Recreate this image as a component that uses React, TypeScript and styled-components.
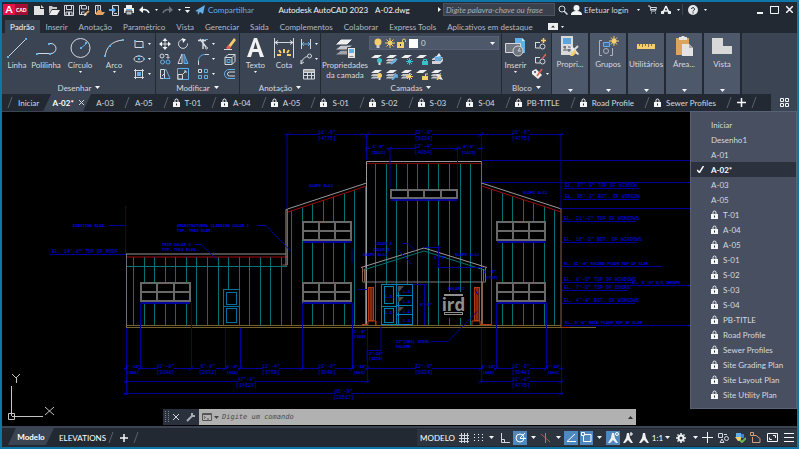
import React, { useState } from "react";
import styled, { createGlobalStyle, css } from "styled-components";

const c = {
  frame: "#0e76a8",
  bar: "#222933",
  panel: "#3b4453",
  raised: "#4d586b",
  menu: "#474f61",
  line: "#2a313c",
  text: "#d5d9df",
  white: "#f4f6f8",
  blue: "#62b0e8",
  active: "#4f87bf",
  yellow: "#f5cd6a",
  orange: "#e0a060",
};

const Global = createGlobalStyle`
  *, *::before, *::after { box-sizing: border-box; }
  body { margin: 0; background: #000; }
  body, button, input, select {
    font-family: Lato, "Open Sans", sans-serif;
    font-size: 8px;
    line-height: 10px;
    color: ${c.text};
  }
  button { border: 0; margin: 0; padding: 0; background: none; white-space: nowrap; cursor: pointer; }
  svg { display: block; flex: none; }
`;

/* ---------- shell ---------- */

const Window = styled.div`
  min-height: 100vh;
  display: flex;
  flex-direction: column;
  background: ${c.bar};
  border: 2px solid ${c.frame};
  overflow: hidden;
`;

const TitleBar = styled.header`
  display: flex;
  align-items: center;
  height: 18px;
  padding: 0 0 3px 1px;
  flex: none;
`;

const Logo = styled.div`
  display: flex;
  align-items: center;
  width: 25px;
  height: 11px;
  margin-right: 3px;
  background: #a30f33;
  color: #fff;
  font-weight: 900;
  font-size: 5px;
`;

const LogoMark = styled.span`
  width: 12px;
  height: 11px;
  margin-right: 1px;
  line-height: 11px;
  font-size: 10px;
  text-align: center;
  background: #e6124a;
`;

const IconButton = styled.button<{ $w?: number; $on?: boolean; $h?: number }>`
  display: flex;
  align-items: center;
  justify-content: center;
  flex: none;
  width: ${(p) => p.$w ?? 15}px;
  height: ${(p) => p.$h ?? 15}px;
  background: ${(p) => (p.$on ? c.active : "none")};
`;

const Share = styled.a`
  display: flex;
  align-items: center;
  gap: 3px;
  margin-left: 2px;
  color: ${c.blue};
  text-decoration: none;
`;

const Title = styled.h1`
  flex: 1;
  display: flex;
  justify-content: center;
  gap: 7px;
  margin: 0;
  padding-right: 4px;
  font-size: 8px;
  font-weight: 400;
  color: ${c.white};
  white-space: nowrap;
`;

const Search = styled.input`
  width: 112px;
  height: 13px;
  margin-left: 2px;
  padding: 0 2px;
  border: 1px solid #4c5462;
  border-radius: 0;
  background: #3a414d;
  font-style: italic;
  &::placeholder { color: #a9aeb6; opacity: 1; }
`;

const Account = styled.button`
  display: flex;
  align-items: center;
  gap: 2px;
  margin-left: 1px;
  width: 58px;
`;

const Divider = styled.span`
  width: 1px;
  height: 11px;
  background: ${c.panel};
`;

const WindowButtons = styled.div`
  display: flex;
  margin-left: 44px;
`;

/* ---------- ribbon ---------- */

const RibbonTabs = styled.nav`
  display: flex;
  align-items: stretch;
  gap: 1px;
  height: 13px;
  padding-left: 3px;
  flex: none;
`;

const RibbonTab = styled.button<{ $on?: boolean }>`
  padding: 0 5px;
  background: ${(p) => (p.$on ? c.panel : "none")};
  color: ${(p) => (p.$on ? c.white : "#b3b9c2")};
`;

const Ribbon = styled.section`
  display: flex;
  height: 61px;
  padding-left: 1px;
  background: ${c.panel};
  flex: none;
`;

const Panel = styled.div`
  display: flex;
  flex-direction: column;
  border-right: 1px solid ${c.bar};
  flex: none;
`;

const PanelBody = styled.div`
  display: flex;
  flex: 1;
  padding-top: 3px;
`;

const PanelTitle = styled.button`
  display: flex;
  align-items: center;
  justify-content: center;
  gap: 4px;
  height: 13px;
`;

const BigButton = styled.button<{ $w: number }>`
  display: flex;
  flex-direction: column;
  align-items: center;
  width: ${(p) => p.$w}px;
  height: 45px;
  padding-top: 1px;
  gap: 1px;
`;

const BigArt = styled.span`
  display: flex;
  align-items: center;
  justify-content: center;
  height: 22px;
`;

const Tools = styled.div<{ $cols: string }>`
  display: grid;
  grid-template-columns: ${(p) => p.$cols};
  grid-auto-rows: 15px;
`;

const Tool = styled.button`
  display: flex;
  align-items: center;
  justify-content: center;
  gap: 3px;
`;

const LayerColumn = styled.div`
  display: flex;
  flex-direction: column;
  gap: 1px;
  width: 132px;
  padding-right: 2px;
`;

const LayerBox = styled.label`
  display: flex;
  align-items: center;
  gap: 2px;
  height: 14px;
  padding: 0 3px;
  background: ${c.raised};
  border: 1px solid #566177;
`;

const Swatch = styled.span`
  width: 9px;
  height: 9px;
  background: #fff;
`;

const LayerSelect = styled.select`
  flex: 1;
  min-width: 0;
  height: 12px;
  padding: 0 1px;
  border: 0;
  background: none;
  appearance: none;
`;

const Collapsed = styled.button`
  display: flex;
  flex-direction: column;
  align-items: center;
  width: 38px;
  padding: 3px 0 2px;
  gap: 2px;
  background: ${c.raised};
  border-right: 2px solid ${c.bar};
  flex: none;
`;

const Grow = styled.span`
  flex: 1;
`;

/* ---------- file tabs ---------- */

const FileTabs = styled.nav`
  display: flex;
  align-items: center;
  height: 18px;
  padding-left: 5px;
  border-bottom: 1px solid ${c.panel};
  flex: none;
`;

const FileTab = styled.button`
  display: flex;
  align-items: center;
  gap: 5px;
  height: 16px;
  padding: 0 10px 0 5px;
`;

const LockedTab = styled(FileTab)`
  padding-left: 4px;
`;

const slanted = css`
  clip-path: polygon(8px 0, 100% 0, calc(100% - 8px) 100%, 0 100%);
`;

const CurrentTab = styled.button`
  display: flex;
  align-items: center;
  justify-content: center;
  gap: 5px;
  width: 48px;
  height: 17px;
  margin-left: -6px;
  padding-left: 2px;
  background: ${c.panel};
  color: #fff;
  font-weight: 700;
  ${slanted}
`;

const TabGrid = styled.button`
  display: flex;
  align-items: center;
  justify-content: center;
  width: 26px;
  height: 17px;
  margin-left: auto;
  background: ${c.panel};
`;

/* ---------- canvas ---------- */

const Canvas = styled.main`
  position: relative;
  flex: 1;
  min-height: 314px;
  background: #000;
`;

const Drawing = styled.svg`
  width: 100%;
  height: 100%;
`;

const Menu = styled.div`
  position: absolute;
  top: -1px;
  right: 0;
  width: 107px;
  padding: 5px 0 6px;
  background: ${c.menu};
  border: 1px solid #586276;
`;

const MenuItem = styled.button<{ $on?: boolean }>`
  display: grid;
  grid-template-columns: 20px auto;
  align-items: center;
  width: 100%;
  height: 15px;
  text-align: left;
  background: ${(p) => (p.$on ? "#2b323e" : "none")};
  color: ${(p) => (p.$on ? "#fff" : c.text)};
  font-weight: ${(p) => (p.$on ? 700 : 400)};
`;

const MenuMark = styled.span`
  display: flex;
  padding-left: 6px;
`;

const MenuLabel = styled.span`
  display: flex;
  align-items: center;
  gap: 5px;
`;

const Command = styled.form`
  position: absolute;
  left: 161px;
  right: 161px;
  bottom: 1px;
  display: flex;
  height: 16px;
  background: ${c.line};
`;

const CommandField = styled.label`
  display: flex;
  align-items: center;
  gap: 2px;
  flex: 1;
  padding: 0 3px;
  background: #b1b1b1;
`;

const CommandInput = styled.input`
  flex: 1;
  min-width: 0;
  height: 14px;
  padding: 0 1px;
  border: 0;
  background: none;
  font: italic 7px "DejaVu Sans Mono", monospace;
  color: #333;
  &::placeholder { color: #4a4a4a; opacity: 1; }
`;

/* ---------- status bar ---------- */

const StatusBar = styled.footer`
  display: flex;
  align-items: center;
  height: 21px;
  padding-left: 6px;
  border-top: 2px solid ${c.panel};
  flex: none;
`;

const ModelTab = styled.button`
  width: 46px;
  height: 17px;
  margin-bottom: 2px;
  background: ${c.panel};
  color: #fff;
  font-weight: 700;
  ${slanted}
`;

const LayoutTab = styled.button`
  padding: 0 2px 0 5px;
  color: #fff;
`;

const StatusTools = styled.div`
  display: flex;
  align-items: center;
  height: 17px;
  margin-left: auto;
  padding-right: 1px;
  background: #2c3440;
  color: #fff;
`;

const StatusText = styled.button<{ $w: number }>`
  width: ${(p) => p.$w}px;
  color: #fff;
`;

const Spacer = styled.span<{ $w: number }>`
  width: ${(p) => p.$w}px;
`;

/* ---------- icons ---------- */

type IcProps = { w?: number; h?: number; s?: string; sw?: number; children: React.ReactNode };
const Ic = ({ w = 12, h = 12, s = c.text, sw = 1, children }: IcProps) => (
  <svg width={w} height={h} viewBox={`0 0 ${w} ${h}`} fill="none" stroke={s} strokeWidth={sw} aria-hidden="true">
    {children}
  </svg>
);

const Caret = ({ color = c.white }: { color?: string }) => (
  <Ic w={5} h={3} s="none"><path d="M0 0h5L2.500 3z" fill={color} /></Ic>
);
const SmallCaret = () => <Ic w={3} h={2} s="none"><path d="M0 0h3L1.500 2z" fill={c.white} /></Ic>;
const Lock = () => (
  <Ic w={7} h={9} s={c.white}><path d="M2 4V2.500a1.500 1.500 0 0 1 3 0V4" /><path d="M0 4h7v5H0z" fill={c.white} stroke="none" /><path d="M3 5.500h1v2H3z" fill={c.bar} stroke="none" /></Ic>
);
const Slash = () => <Ic w={6} h={11} s="#59626f"><path d="M5 0L1 11" /></Ic>;
const Plus = ({ size = 9 }: { size?: number }) => (
  <Ic w={size} h={size} s={c.white} sw={1.5}><path d={`M0 ${size / 2}h${size}M${size / 2} 0v${size}`} /></Ic>
);

const quick: { name: string; art: React.ReactNode }[] = [
  { name: "Novo", art: <Ic><path d="M1 2h6v3h4v6H1z" fill="#e2e2e2" stroke="none" /><path d="M8 1l3 3H8z" fill="#e2e2e2" stroke="none" /></Ic> },
  { name: "Abrir", art: <Ic><path d="M1 10V2h3l1 1h4v2H4L1 10z" fill="#c9c9c9" stroke="none" /><path d="M4 6h8l-3 5H1z" fill="#eee" stroke="none" /></Ic> },
  { name: "Salvar", art: <Ic><path d="M1.500 1.500h9v10h-9zM3.500 1.500v4h5v-4M3 11V8h6v3" /><path d="M5 8h2v3H5z" fill={c.text} stroke="none" /></Ic> },
  { name: "Salvar como", art: <Ic><path d="M8 1.500H1.500v9H6M3.500 2v3h5V2M3.500 10V8h3M10.500 2v4" /><path d="M6 11l5-4" stroke={c.orange} strokeWidth={2} /><path d="M6 12l1-3 2 2z" fill="#eee" stroke="none" /></Ic> },
  { name: "Abrir da Web", art: <Ic><path d="M2.500 10V1.500h5V6" /><path d="M4 3h2M4 5h2" /><path d="M3 9l2-3h3l1 2h3l-2 3H3z" fill={c.orange} stroke="none" /></Ic> },
  { name: "Salvar na Web", art: <Ic><path d="M4.500 1.500h6v10h-6z" /><path d="M6 9.500h3" /><path d="M1 5h4V3l3 3-3 3V7H1z" fill={c.blue} stroke="none" /></Ic> },
  { name: "Plotar", art: <Ic><path d="M3 1h6v3H3zM1 4h10v5H1z" fill="#eee" stroke="none" /><path d="M3 7h6v4H3z" fill="#bbb" stroke={c.bar} /><path d="M3 5.500h6" stroke={c.blue} /></Ic> },
];

const Undo = ({ flip, color }: { flip?: boolean; color: string }) => (
  <Ic w={11} h={8} s={color} sw={1.5}>
    <path d={flip ? "M1 7c1-3 4-4 7-3" : "M10 7c-1-3-4-4-7-3"} />
    <path d={flip ? "M7 0l4 4-4 3z" : "M4 0L0 4l4 3z"} fill={color} stroke="none" />
  </Ic>
);

const dot = (x: number, y: number) => <rect x={x - 1} y={y - 1} width={2} height={2} fill={c.blue} stroke="none" />;

const art = {
  line: <Ic w={20} h={20}><path d="M1 19L19 1" />{dot(1, 19)}{dot(19, 1)}</Ic>,
  poly: <Ic w={21} h={20}><path d="M1 15.500h14a5 5 0 0 0 0-10h-2" />{dot(1, 16)}{dot(14, 16)}{dot(13, 6)}</Ic>,
  circle: <Ic w={21} h={20}><circle cx="10.500" cy="10" r="9.500" /><path d="M11 10l5-4" stroke={c.blue} />{dot(11, 10)}{dot(16, 5)}</Ic>,
  arc: <Ic w={20} h={20}><path d="M1 19C2 9 8 3 19 2" />{dot(1, 18)}{dot(6, 8)}{dot(19, 2)}</Ic>,
  text: <Ic w={17} h={20} s="none"><path d="M0 19L7 0h3l7 19h-4l-1.500-5h-6L4 19zM6.500 11h4L8.500 4z" fill="#f2f2f2" fillRule="evenodd" /></Ic>,
  dim: <Ic w={22} h={20}><path d="M1.500 0v20M20.500 0v20M2 4.500h18M5 2.500l-3 2 3 2M17 2.500l3 2-3 2" /><path d="M11 11v4M6 12l2 3M16 12l-2 3M4 17h4M14 17h4" stroke={c.yellow} strokeWidth={2} /></Ic>,
  layers: (
    <Ic w={23} h={21} s={c.panel}>
      <path d="M1 17l6-5h12l-6 5z" fill="#9ea4ac" /><path d="M1 12l6-5h12l-6 5z" fill="#c3c7cc" /><path d="M1 7l6-6h12l-6 6z" fill="#eee" />
      <path d="M13.500 9.500h8v11h-8z" fill="#e8e8e8" /><path d="M15 11h5v4h-5z" fill={c.blue} stroke="none" /><path d="M15.500 18.500h4" stroke="#888" />
    </Ic>
  ),
  insert: (
    <Ic w={21} h={20}><path d="M10 0h7l3 3v12H10z" fill={c.blue} stroke="none" /><path d="M17 0v3h3z" fill="#cfe9fb" stroke="none" /><path d="M.5 5.500h15v9H.5z" fill="#70767f" /><circle cx="13" cy="13" r="5" fill="#70767f" /><path d="M13 13l2-3M13 13h3" /></Ic>
  ),
  props: (
    <Ic w={20} h={21} s="none"><path d="M1 0h12v19H1z" fill="#dadada" /><path d="M3 2h8v6H3z" fill="#58a5df" /><path d="M3 11h3M8 11h3M3 14h8M5 10v3M9 13v3" stroke="#4b5260" /><path d="M10 9l4 3 5 6-1 1-6-4z" fill="#eee" /><path d="M18 10l-4 4" stroke="#ddd" strokeWidth={2} /><path d="M14 14l-4 6h3l4-4z" fill={c.yellow} /></Ic>
  ),
  groups: (
    <Ic w={21} h={21} s="#aeb4bc"><path d="M4 4.500H1.500v15H4M12 19.500h2.500V12" /><path d="M5.500 6.500h6v4h-6z" stroke={c.blue} fill="#3b6f9a" /><circle cx="8" cy="15" r="2.500" /><path d="M16 0v10M11 5h10M13 1.500l6 7M19 1.500l-6 7" stroke={c.yellow} /><circle cx="16" cy="5" r="2.500" fill={c.yellow} stroke="none" /></Ic>
  ),
  utils: <Ic w={20} h={21} s="#8a7340"><path d="M1 8h18v5H1z" fill={c.yellow} stroke="none" /><path d="M3.500 8v2M6.500 8v3M9.500 8v2M12.500 8v3M15.500 8v2" /></Ic>,
  clip: <Ic w={20} h={21} s="none"><path d="M2 2h13v17H2z" fill="#dca55c" /><path d="M5 1h2l1-1h2l1 1h2v3H5z" fill="#e5e5e5" /><path d="M8 8h7l4 4v8H8z" fill="#e3e3e3" /><path d="M15 8v4h4z" fill="#aaa" /></Ic>,
  view: <Ic w={20} h={21} s="none"><path d="M0 2h11v8h9v8H0z" fill="#d8d8d8" /></Ic>,
};

const drawTools = [
  <Ic><path d="M2 3.500h8v6H2z" />{dot(2, 3)}{dot(10, 9)}</Ic>,
  <Ic><ellipse cx="6" cy="6" rx="5" ry="3" />{dot(6, 6)}{dot(6, 3)}{dot(11, 6)}</Ic>,
  <Ic><path d="M1 2.500h10M1 9.500h10M2.500 1v10M9.500 1v10" /><path d="M4 4h4v4H4z" fill={c.blue} stroke="none" /></Ic>,
];

const modifyTools: [string, React.ReactNode, boolean?][] = [
  ["Mover", <Ic><path d="M6 2v8M2 6h8" /><path d="M6 0l2.500 3h-5zM6 12l2.500-3h-5zM0 6l3-2.500v5zM12 6L9 3.500v5z" fill={c.white} stroke="none" /></Ic>],
  ["Rotacionar", <Ic><path d="M7 1.500a4.500 4.500 0 1 0 3.500 4" /><path d="M5 0l4 1.500L6 5z" fill={c.white} stroke="none" /></Ic>],
  ["Aparar", <Ic><path d="M1 2.500h8M6 1v10M3 1l6 8" strokeWidth={1.5} /><circle cx="9.500" cy="10" r="1" /><path d="M8 1.500h3" stroke={c.blue} /></Ic>, true],
  ["Apagar", <Ic s="none"><path d="M4 8l6-8 2 2-6 8z" fill={c.yellow} /><path d="M4 7l3 2-2 3-3-2z" fill="#e5604f" /><path d="M0 11h8v1H0z" fill="#ddd" /></Ic>],
  ["Copiar", <Ic><circle cx="3" cy="3" r="2" /><circle cx="3.500" cy="9" r="2" stroke={c.blue} /><circle cx="9" cy="9" r="2" stroke={c.blue} /><path d="M6 1.500h3V5M7.500 4L9 5.500 10.500 4" /></Ic>],
  ["Espelhar", <Ic><path d="M5 1v9.500H1z" /><path d="M7 1v9.500h4z" stroke={c.blue} fill="#3d6d96" /></Ic>],
  ["Concordar", <Ic><path d="M1.500 12V7M7 1.500h5" /><path d="M1.500 8C1.500 4 4 1.500 8 1.500" stroke={c.blue} /></Ic>, true],
  ["Explodir", <Ic><path d="M1 4.500h7v7H1zM1 4.500l3-3h7l-3 3M11 1.500v7l-3 3" /><path d="M3 6.500h3v3H3z" stroke={c.blue} /></Ic>],
  ["Esticar", <Ic><path d="M1.500 1.500h4v9h-4z" /><path d="M6 1.500h1l4 9H4" stroke={c.blue} /><path d="M3 8l3-3" /></Ic>],
  ["Escala", <Ic><path d="M.500 .500h11v11H.500z" stroke={c.blue} /><path d="M1 6.500h4.500V11H1z" /><path d="M6 6l3-3M7 3h2v2" /></Ic>],
  ["Matriz", <Ic><path d="M1.500 1.500h3v3h-3z" /><path d="M7.500 1.500h3v3h-3zM1.500 7.500h3v3h-3zM7.500 7.500h3v3h-3z" stroke={c.blue} /></Ic>, true],
  ["Deslocamento", <Ic><path d="M11 1.500H5a4.500 4.500 0 0 0 0 9h6" stroke={c.blue} /><path d="M11 4H5.500a2 2 0 0 0 0 4H11" /></Ic>],
];

const annotTools = [
  <Ic><path d="M1.500 1v10M10.500 1v10" /><path d="M2 6h8M4 4L2 6l2 2M8 4l2 2-2 2" stroke={c.blue} /></Ic>,
  <Ic><circle cx="9.500" cy="3" r="2" /><path d="M7.500 3.500C4 4 2 7 1 11M1 7v4l3-2" /></Ic>,
  <Ic><path d="M.500 1.500h11v9.500H.500zM0 4.500h12M0 7.500h12M4.500 4v7M8.500 4v7" /><path d="M1 2h10v2H1z" fill="#aaa" stroke="none" /></Ic>,
];

const LayerIcon = ({ full, badge }: { full: boolean; badge: React.ReactNode }) => (
  <Ic s="none">
    <path d="M0 5l4-3h7L7 5z" fill="#eee" />
    {full && <path d="M0 7.500L2 6h6l2-1v1L7 8H0zM0 10l2-1.500h6l2-1v1L7 10.500H0z" fill="#bfc3c9" />}
    {badge}
  </Ic>
);
const bulb = (color: string) => <><circle cx="8.500" cy="7.500" r="2.500" fill={color} /><path d="M7.500 9.500h2V12h-2z" fill="#ddd" /></>;
const layerTools: [string, React.ReactNode][] = [
  ["Desligar", <LayerIcon full={false} badge={bulb("#35c2c9")} />],
  ["Isolar", <LayerIcon full badge={<path d="M5 11l6-5" stroke={c.blue} strokeWidth={2} />} />],
  ["Congelar", <LayerIcon full={false} badge={<path d="M8.500 5v7M5 8.500h7M6 6l5 5M11 6l-5 5" stroke="#35c2c9" />} />],
  ["Bloquear", <LayerIcon full={false} badge={<><path d="M6 8h6v4H6z" fill="#35c2c9" /><path d="M7.500 8V6.500h3V8" stroke="#35c2c9" /></>} />],
  ["Tornar atual", <Ic s="none"><path d="M1 6l3-2h8l-3 3H1zM1 8h8l3-3v3l-3 3H1z" fill="#cfd3d8" /><path d="M4 3h6v4l-2 1H4z" fill={c.blue} /><path d="M5 4l3-4 2 3z" fill="#eee" /></Ic>],
  ["Ligar todas", <LayerIcon full badge={bulb(c.yellow)} />],
  ["Desfazer isolamento", <LayerIcon full badge={<path d="M6 12l5-5M8 7h3v3" stroke={c.blue} strokeWidth={1.5} />} />],
  ["Descongelar", <LayerIcon full badge={<path d="M8.500 5v7M5 8.500h7M6 6l5 5M11 6l-5 5" stroke={c.yellow} />} />],
  ["Desbloquear", <LayerIcon full={false} badge={<><path d="M6 8h6v4H6z" fill={c.yellow} /><path d="M9.500 8V6h3" stroke={c.yellow} /></>} />],
  ["Corresponder", <LayerIcon full badge={<><path d="M5 6l4 1 3 5-4-1z" fill="#eee" /><path d="M10 7l-4 5" stroke={c.yellow} strokeWidth={1.5} /></>} />],
];

const blockTools = [
  <Ic><path d="M1 4.500h5M1.500 4v6H6" /><circle cx="8.500" cy="8.500" r="2.500" /><path d="M9.500 0v5M7 2.500h5" stroke={c.yellow} strokeWidth={1.5} /></Ic>,
  <Ic><path d="M1 4.500h5M1.500 4v6H6" /><circle cx="8.500" cy="8.500" r="2.500" /><path d="M8 6l4-5" stroke="#e5604f" strokeWidth={1.5} /></Ic>,
  <Ic><path d="M1 3l4-2 6 6-4 4-6-5z" fill="#eee" stroke="none" /><circle cx="4" cy="4" r="1" fill={c.panel} stroke="none" /><path d="M6 8l5-7" stroke="#e5604f" strokeWidth={1.5} /></Ic>,
];

const Sun = () => <Ic w={10} h={10} s={c.yellow}><circle cx="5" cy="5" r="2" fill={c.yellow} /><path d="M5 0v10M0 5h10M1.500 1.500l7 7M8.500 1.500l-7 7" /></Ic>;
const Bulb = () => <Ic w={10} h={11} s="none"><circle cx="5" cy="4" r="3.500" fill={c.yellow} /><path d="M3.500 7h3v3h-3z" fill="#cfcfcf" /></Ic>;
const OpenLock = () => <Ic w={10} h={10} s={c.yellow}><path d="M0 4h7v6H0z" fill={c.yellow} stroke="none" /><path d="M5.500 4V2.500a1.500 1.500 0 0 1 3 0V4" /><path d="M3 6h1v2H3z" fill={c.line} stroke="none" /></Ic>;

/* ---------- building elevation ---------- */

const B = "#00009e";
const T = "#007272";
const G = "#686868";
const BR = "#85604f";

const range = (from: number, n: number, step: number) => Array.from({ length: n }, (_, i) => Math.round(from + i * step) + 0.5);

const V = ({ x, y1, y2, s = B }: { x: number; y1: number; y2: number; s?: string }) => <path d={`M${x} ${y1}V${y2}`} stroke={s} />;
const H = ({ y, x1, x2, s = B }: { y: number; x1: number; x2: number; s?: string }) => <path d={`M${x1} ${y}H${x2}`} stroke={s} />;
const Note = ({ x, y, mid, small, children }: { x: number; y: number; mid?: boolean; small?: boolean; children: string }) => (
  <text x={x} y={y} textAnchor={mid ? "middle" : "start"} fill="#0000f0" fontSize={small ? 4 : 5} fontWeight={small ? 700 : 400} fontFamily={small ? "DejaVu Sans Mono, monospace" : "Liberation Mono, monospace"}>{children}</text>
);

const Glazing = ({ x, y, w, h, cols, rows }: { x: number; y: number; w: number; h: number; cols: number; rows: number }) => (
  <g stroke={G} strokeWidth={2}>
    <rect x={x} y={y} width={w} height={h} fill="#000" />
    {Array.from({ length: cols - 1 }, (_, i) => <path key={i} d={`M${x + Math.round((w * (i + 1)) / cols)} ${y}v${h}`} />)}
    {rows > 1 && <path d={`M${x} ${y + h / 2}h${w}`} />}
    <path d={`M${x} ${y + h + 2}h${w}`} stroke={B} />
  </g>
);

const Dimension = ({ x1, x2, y, a, b }: { x1: number; x2: number; y: number; a: string; b: string }) => {
  const m = (x1 + x2) / 2;
  const gap = Math.min(8, (x2 - x1) / 2 - 2);
  const small = x2 - x1 < 30;
  return (
    <g>
      <path d={`M${x1 - 2} ${y}H${m - gap}M${m + gap} ${y}H${x2 + 2}M${x1 - 2} ${y + 2}l4-4M${x2 - 2} ${y + 2}l4-4`} stroke={B} />
      <Note x={m} y={y - 1} mid small={small}>{a}</Note>
      <Note x={m} y={y + 5} mid small={small}>{b}</Note>
    </g>
  );
};

const levels: [number, number, number, string][] = [
  [565, 188, 639, "EL. 37'-9\" TOP OF WINDOW"],
  [565, 199, 639, "EL. 35'-2\" BOT. OF WINDOW"],
  [564, 221, 636, "EL. 21'-2\" TOP OF WINDOWS"],
  [564, 242, 637, "EL. 16'-2\" BOT. OF WINDOWS"],
  [564, 266, 662, "EL. 11'-8\" SECOND FLOOR TOP OF SLAB"],
  [564, 282, 631, "EL. 8'-0\" TOP OF WINDOWS"],
  [632, 285, 690, "EL. 8'-0\" U/S CANOPY"],
  [564, 290, 628, "EL. 7'-0\" TOP OF DOORS"],
  [564, 303, 635, "EL. 4'-4\" BOT. OF WINDOWS"],
  [565, 325, 690, "EL. 0'-0\" MAIN FLOOR TOP OF SLAB"],
];

const chain = [126, 140, 191, 225, 240, 302, 352, 367, 481, 496, 546, 561];
const chainText: [string, string][] = [
  ["2'-10\"", "[864]"], ["10'-0\"", "[3048]"], ["6'-8\"", "[2032]"], ["3'-0\"", "[914]"], ["12'-4\"", "[3759]"], ["10'-0\"", "[3048]"],
  ["2'-10\"", "[864]"], ["22'-9\"", "[6934]"], ["2'-10\"", "[864]"], ["10'-0\"", "[3048]"], ["2'-10\"", "[864]"],
];

const Elevation = () => (
  <Drawing viewBox="2 112 795 314" preserveAspectRatio="xMinYMin meet" fill="none" strokeWidth={1} role="img" aria-label="Elevação do edifício">
    {range(133, 15, 10.570).map((x) => <V key={x} x={x} y1={257} y2={325} s={T} />)}
    {range(291, 8, 10.570).map((x) => <V key={x} x={x} y1={212 - (x - 287) * 0.325} y2={325} s={T} />)}
    {range(375, 10, 10.570).map((x) => <V key={x} x={x} y1={163} y2={325} s={T} />)}
    {range(491, 7, 10.570).map((x) => <V key={x} x={x} y1={186 + (x - 481) * 0.325} y2={325} s={T} />)}

    <V x={126.5} y1={254} y2={327} s="#706a80" />
    <H x1={126} x2={286} y={254} s="#959595" />
    <H x1={127} x2={287} y={257} s="#a00a0a" />
    <H x1={127} x2={287} y={266.5} s={T} />
    <Glazing x={141} y={283} w={49} h={18} cols={3} rows={2} />
    <g stroke="#00709c" fill="#000"><rect x="223.500" y="289.500" width="16" height="36" /><path d="M224 306.500h15" /><rect x="226.500" y="292.500" width="10" height="12" /><rect x="226.500" y="308.500" width="10" height="14" /></g>

    <path d="M286 265.500V209.500L366.500 183" stroke="#999" />
    <path d="M287.500 209V265h-5" stroke={BR} />
    <path d="M288 212L366.500 186" stroke="#a00a0a" />
    <path d="M366.500 325V161.500H481.500" stroke="#999" />
    <H x1={367} x2={481} y={163.500} s="#780808" />
    <V x={481.500} y1={161} y2={325} s="#1c8c8c" />
    <path d="M481.500 183L561.500 209" stroke="#999" />
    <path d="M481.500 186L561 212" stroke="#a00a0a" />
    <V x={561} y1={209} y2={327} s={BR} />
    {[[303, 222], [303, 283], [497, 222], [497, 283]].map(([x, y]) => <Glazing key={`${x}-${y}`} x={x} y={y} w={48} h={18} cols={3} rows={2} />)}
    <Glazing x={391} y={190} w={66} h={8} cols={4} rows={1} />

    <path d="M361 267.500L424 248l63 19.500" stroke="#999" />
    <path d="M362 270.500L424 251l62 19.500" stroke={T} />
    <path d="M362.500 267v15h3v43M364.500 269v12M485.500 267v15h-3v43M483.500 269v12" stroke={BR} />
    <H x1={364} x2={484} y={282} s="#7b7b7b" />
    <g stroke="#b83a12" fill="#5c1c08"><rect x="368.500" y="287.500" width="5" height="33" /><rect x="474.500" y="287.500" width="5" height="33" /><path d="M371 288v32M477 288v32M362 324.500h6v-3.500h8v4M472 325v-4h8v3.500h11" fill="none" /></g>
    <g stroke="#0080b0"><rect x="381.500" y="284.500" width="31" height="40" fill="#000" /><path d="M396.500 285v40M382 306.500h14M397 295.500h15M397 305.500h15M397 314.500h15M398.500 286v38" /><rect x="384.500" y="286.500" width="9" height="17" /><rect x="384.500" y="308.500" width="9" height="14" /></g>
    <path d="M398 286h6l-6 7zM398 297h6l-6 6zM398 307h6l-6 6z" fill="#4a4a4a" />
    {[293, 303, 313, 322].map((y) => <Note key={y} x={403} y={y} small>L.G.</Note>)}
    <Note x={385} y={298} small>L.G.</Note><Note x={385} y={314} small>L.G.</Note>
    <path d="M443 292h22v26h-22z" fill="#000" />
    <g stroke="#909090"><rect x="444.500" y="294.500" width="18" height="1" /><rect x="444.500" y="312.500" width="18" height="2" /></g>
    <text x="453.500" y="311" textAnchor="middle" fill="#909090" fontSize="17" fontWeight="700" fontFamily="Open Sans, sans-serif">ird</text>
    <H x1={126} x2={561} y={325.500} s="#74622f" />
    <H x1={126} x2={596} y={327.500} s="#74622f" />
    <path d="M561 327.500h9" stroke="#a43410" />

    {[[126, 395], [140, 369], [191, 369], [225, 369], [240, 369], [302, 369], [352, 369], [367, 383], [481, 383], [496, 369], [546, 369], [561, 395]].map(([x, y]) => (
      <V key={x} x={x + 0.5} y1={x === 140 || x === 191 || x === 302 || x === 352 || x === 496 || x === 546 ? 303 : 328} y2={y} />
    ))}
    {chainText.map(([a, b], i) => <Dimension key={i} x1={chain[i]} x2={chain[i + 1]} y={368.500} a={a} b={b} />)}
    <Dimension x1={126} x2={367} y={381.500} a={"47'-8\""} b="[14529]" />
    <Dimension x1={481} x2={561} y={381.500} a={"16'-8\""} b="[4775]" />
    <Dimension x1={126} x2={561} y={393.500} a={"86'-9\""} b="[26517]" />
    <Dimension x1={287} x2={367} y={134.500} a={"16'-6\""} b="[4775]" />
    <Dimension x1={367} x2={481} y={134.500} a={"22'-9\""} b="[6934]" />
    <Dimension x1={481} x2={561} y={134.500} a={"16'-6\""} b="[4775]" />
    <Dimension x1={367} x2={390} y={148.500} a={"4'-8\""} b="[1422]" />
    <Dimension x1={390} x2={457} y={148.500} a={"13'-4\""} b="[4064]" />
    <Dimension x1={457} x2={481} y={148.500} a={"4'-8\""} b="[1422]" />
    <V x={287} y1={134} y2={209} /><V x={366.500} y1={134} y2={160} /><V x={481.500} y1={134} y2={160} /><V x={561} y1={134} y2={209} />
    <V x={390} y1={148} y2={188} /><V x={457.500} y1={148} y2={188} />
    <H x1={482} x2={690} y={160.500} /><H x1={482} x2={690} y={182.500} /><H x1={562} x2={690} y={208.500} />
    {levels.map(([x1, y, x2, t]) => <g key={`${x1}-${y}`}><H x1={x1 - 2} x2={x2} y={y + 0.5} /><Note x={x1} y={y - 1} small={t.length > 28 || x1 > 600}>{t}</Note></g>)}

    <V x={125.500} y1={206} y2={254} /><H x1={109} x2={125} y={225.500} /><H x1={50} x2={126} y={254.500} />
    <Note x={73} y={227} small>EXISTING BLDG.</Note><Note x={52} y={253}>EL. 14'-8" TOP OF ROOF</Note>
    <Note x={177} y={227} small>ARCHITECTURAL CLADDING COLOR 1</Note><Note x={177} y={232} small>TYP. THIS ELEV.</Note>
    <path d="M257 225.500h9l25 26M195 244.500h6l17 16M402 243.500h6l7 7M398 249.500l14 15" stroke={B} />
    <Note x={162} y={246} small>TRIM COLOR 3</Note><Note x={162} y={251} small>TYP. THIS ELEV.</Note>
    <Note x={309} y={187} small>SLOPE 4:12</Note><Note x={523} y={194} small>SLOPE 4:12</Note>
    <Note x={375} y={245} small>COLOR 2</Note><Note x={373} y={251} small>COLOR 1</Note><Note x={363} y={256} small>SLOPE 4:12</Note><Note x={455} y={256} small>SLOPE 4:12</Note><Note x={448} y={290} small>COLOR 2</Note>
    <path d="M424 247.500h17M438.500 246v22M437 267.500h47M475 290l3 5M424.500 284v41M414 284.500h13M431 341.500h17l29-30M367 350v9M381 327v24M367 350.500h14M358 289.500h10M352 249v14" stroke={B} />
    <Note x={396} y={343} small>12"[305] STEEL</Note><Note x={396} y={348} small>COLUMN</Note><Note x={376} y={355} mid small>3'-10"</Note><Note x={376} y={360} mid small>[1176]</Note><Note x={360} y={333} mid small>1'-0"</Note><Note x={360} y={338} mid small>[305]</Note>
    <Note x={484} y={273} small>2'-4"</Note><Note x={486} y={279} small>[707]</Note><Note x={420} y={306} small>8'-0"</Note><Note x={434} y={259} small>4'-1"</Note>

    <g stroke="#c4c4c4"><path d="M11.500 416V386M12 416.500h31M8.500 413.500h6v6h-6zM12 374l4 4 4-4M16.500 378v5M45 407l9 8M54 407l-9 8" /></g>
  </Drawing>
);

/* ---------- data ---------- */

const ribbonNames = ["Padrão", "Inserir", "Anotação", "Paramétrico", "Vista", "Gerenciar", "Saída", "Complementos", "Colaborar", "Express Tools", "Aplicativos em destaque"];
const lockedTabs = ["T-01", "A-04", "A-05", "S-01", "S-02", "S-03", "S-04", "PB-TITLE", "Road Profile", "Sewer Profiles"];
const menuFiles = ["Iniciar", "Desenho1", "A-01", "A-02*", "A-03", "A-05"];
const menuLocked = [...lockedTabs, "Site Grading Plan", "Site Layout Plan", "Site Utility Plan"];
const collapsed: [string, React.ReactNode][] = [["Propri...", art.props], ["Grupos", art.groups], ["Utilitários", art.utils], ["Área...", art.clip], ["Vista", art.view]];

const Big = ({ w, icon, label, caret }: { w: number; icon: React.ReactNode; label: React.ReactNode; caret?: boolean }) => (
  <BigButton $w={w}><BigArt>{icon}</BigArt><span>{label}</span>{caret && <SmallCaret />}</BigButton>
);

const Person = ({ extra }: { extra?: React.ReactNode }) => (
  <Ic s="none"><path d="M5 1h2l1 5 3 5H9L6 8l-3 3H1l3-5z" fill="#f0f0f0" />{extra}</Ic>
);

export default function App() {
  const [ribbon, setRibbon] = useState("Padrão");
  return (
    <>
      <Global />
      <Window>
        <TitleBar>
          <Logo><LogoMark>A</LogoMark>CAD</Logo>
          {quick.map((q) => <IconButton key={q.name} aria-label={q.name}>{q.art}</IconButton>)}
          <IconButton $w={17} aria-label="Desfazer"><Undo color={c.white} /></IconButton>
          <IconButton $w={6} aria-label="Histórico de desfazer"><SmallCaret /></IconButton>
          <IconButton $w={17} aria-label="Refazer"><Undo flip color="#6b7480" /></IconButton>
          <IconButton $w={6} aria-label="Histórico de refazer"><SmallCaret /></IconButton>
          <IconButton $w={11} aria-label="Personalizar"><Ic w={5} h={6} s="none"><path d="M0 0h5v1H0zM0 3h5L2.500 6z" fill={c.white} /></Ic></IconButton>
          <Share href="#"><Ic w={10} h={10} s="none"><path d="M0 6l10-6-2 9-3-2-2 3-.5-4L8 2 2 6.500z" fill={c.blue} /></Ic>Compartilhar</Share>
          <Title><span>Autodesk AutoCAD 2023</span><span>A-02.dwg</span></Title>
          <Ic w={3} h={5} s="none"><path d="M0 0l3 2.500L0 5z" fill={c.white} /></Ic>
          <Search aria-label="Pesquisar" placeholder="Digite palavra-chave ou frase" />
          <IconButton aria-label="Buscar"><Ic w={10} h={10}><circle cx="4" cy="4" r="3" /><path d="M6 6l3.500 3.500" strokeWidth={1.5} /></Ic></IconButton>
          <Account><Ic w={11} h={10} s="none"><circle cx="5.500" cy="3" r="3" fill={c.white} /><path d="M0 10c0-3 2-4 5.500-4S11 7 11 10z" fill={c.white} /></Ic>Efetuar login</Account>
          <IconButton $w={18} aria-label="Opções da conta"><SmallCaret /></IconButton>
          <IconButton $w={10} aria-label="Loja"><Ic w={9} h={9}><path d="M0 1h2l1 5h4.500L8.500 2.500h-6M3 4.500h5" /><path d="M3 8h1M7 8h1" /></Ic></IconButton>
          <IconButton $w={17} aria-label="Autodesk App Store"><Ic w={10} h={9} s={c.white} sw={1.5}><path d="M5 1L2 7.500M5 1l3 6.500M2 6h6" /><circle cx="1.500" cy="7.500" r="1" /><circle cx="8.500" cy="7.500" r="1" /></Ic></IconButton>
          <IconButton $w={8} aria-label="Mais aplicativos"><SmallCaret /></IconButton>
          <Divider />
          <IconButton $w={20} aria-label="Ajuda"><Ic w={10} h={10} s="none"><circle cx="5" cy="5" r="5" fill="#e4e6e9" /><path d="M3.500 4a1.500 1.500 0 1 1 2 1.500Q5 5.800 5 6.500M5 7.300V8.500" stroke={c.bar} /></Ic></IconButton>
          <IconButton $w={5} aria-label="Mais ajuda"><SmallCaret /></IconButton>
          <WindowButtons>
            <IconButton aria-label="Minimizar"><Ic w={6} h={9} s={c.white} sw={2}><path d="M0 8h6" /></Ic></IconButton>
            <IconButton aria-label="Maximizar"><Ic w={9} h={9} s={c.white}><path d="M.500 1.500h8v7h-8zM0 1.500h9" /></Ic></IconButton>
            <IconButton aria-label="Fechar"><Ic w={7} h={7} s={c.white} sw={1.5}><path d="M0 0l7 7M7 0L0 7" /></Ic></IconButton>
          </WindowButtons>
        </TitleBar>

        <RibbonTabs>
          {ribbonNames.map((n) => <RibbonTab key={n} $on={n === ribbon} onClick={() => setRibbon(n)}>{n}</RibbonTab>)}
          <IconButton $w={34} $h={13} aria-label="Minimizar faixa de opções"><Ic w={16} h={7} s="none"><path d="M0 0h10v7H0z" fill="#eee" /><path d="M3 4.500h4L5 2.500z" fill={c.bar} /><path d="M13 3h3l-1.500 2z" fill="#eee" /></Ic></IconButton>
        </RibbonTabs>

        <Ribbon>
          <Panel>
            <PanelBody>
              <Big w={28} icon={art.line} label="Linha" />
              <Big w={30} icon={art.poly} label="Polilinha" />
              <Big w={38} icon={art.circle} label="Círculo" caret />
              <Big w={30} icon={art.arc} label="Arco" caret />
              <Tools $cols="26px">
                {drawTools.map((t, i) => <Tool key={i} aria-label={["Retângulo", "Elipse", "Hachura"][i]}>{t}<SmallCaret /></Tool>)}
              </Tools>
            </PanelBody>
            <PanelTitle>Desenhar<Caret /></PanelTitle>
          </Panel>
          <Panel>
            <PanelBody>
              <Tools $cols="18px 18px 28px 19px">
                {modifyTools.map(([n, t, k]) => <Tool key={n} aria-label={n}>{t}{k && <SmallCaret />}</Tool>)}
              </Tools>
            </PanelBody>
            <PanelTitle>Modificar<Caret /></PanelTitle>
          </Panel>
          <Panel>
            <PanelBody>
              <Big w={31} icon={art.text} label="Texto" caret />
              <Big w={26} icon={art.dim} label="Cota" />
              <Tools $cols="23px">
                {annotTools.map((t, i) => <Tool key={i} aria-label={["Linear", "Chamada", "Tabela"][i]}>{t}{i < 2 && <SmallCaret />}</Tool>)}
              </Tools>
            </PanelBody>
            <PanelTitle>Anotação<Caret /></PanelTitle>
          </Panel>
          <Panel>
            <PanelBody>
              <Big w={48} icon={art.layers} label={<>Propriedades<br />da camada</>} />
              <LayerColumn>
                <LayerBox>
                  <Bulb /><Sun /><OpenLock /><Swatch />
                  <LayerSelect aria-label="Camada atual"><option>0</option></LayerSelect>
                  <Caret />
                </LayerBox>
                <Tools $cols="repeat(5, 15px)">
                  {layerTools.map(([n, t]) => <Tool key={n} aria-label={n}>{t}</Tool>)}
                </Tools>
              </LayerColumn>
            </PanelBody>
            <PanelTitle>Camadas<Caret /></PanelTitle>
          </Panel>
          <Panel>
            <PanelBody>
              <Big w={27} icon={art.insert} label="Inserir" caret />
              <Tools $cols="22px">
                {blockTools.map((t, i) => <Tool key={i} aria-label={["Criar bloco", "Editar bloco", "Editar atributos"][i]}>{t}{i === 2 && <SmallCaret />}</Tool>)}
              </Tools>
            </PanelBody>
            <PanelTitle>Bloco<Caret /></PanelTitle>
          </Panel>
          {collapsed.map(([n, icon]) => <Collapsed key={n}>{icon}<span>{n}</span><Grow /><Caret /></Collapsed>)}
        </Ribbon>

        <FileTabs>
          <Slash />
          <FileTab>Iniciar</FileTab>
          <CurrentTab>A-02*<Ic w={5} h={5}><path d="M0 0l5 5M5 0L0 5" /></Ic></CurrentTab>
          <FileTab>A-03</FileTab>
          <Slash />
          <FileTab>A-05</FileTab>
          {lockedTabs.map((t) => <React.Fragment key={t}><Slash /><LockedTab><Lock />{t}</LockedTab></React.Fragment>)}
          <Slash />
          <IconButton $w={19} aria-label="Novo desenho"><Plus /></IconButton>
          <Slash />
          <TabGrid aria-label="Lista de arquivos"><Ic w={9} h={9} s={c.white}><path d="M.500 .500h3v3h-3zM5.500 .500h3v3h-3zM.500 5.500h3v3h-3zM5.500 5.500h3v3h-3z" /></Ic></TabGrid>
        </FileTabs>

        <Canvas>
          <Elevation />
          <Menu role="menu">
            {menuFiles.map((f) => (
              <MenuItem key={f} role="menuitem" $on={f === "A-02*"}>
                <MenuMark>{f === "A-02*" && <Ic w={7} h={7} s="#fff" sw={1.5}><path d="M0 4l2.500 2.500L6.500 0" /></Ic>}</MenuMark>
                <MenuLabel>{f}</MenuLabel>
              </MenuItem>
            ))}
            {menuLocked.map((f) => <MenuItem key={f} role="menuitem"><MenuMark /><MenuLabel><Lock />{f}</MenuLabel></MenuItem>)}
          </Menu>
          <Command onSubmit={(e) => e.preventDefault()}>
            <IconButton type="button" $w={7} $h={16} aria-label="Mover linha de comando"><Ic w={4} h={12} s="#7d8590"><path d="M.500 0v12M3.500 0v12" strokeDasharray="1 1" /></Ic></IconButton>
            <IconButton type="button" $w={12} $h={16} aria-label="Fechar linha de comando"><Ic w={6} h={6}><path d="M0 0l6 6M6 0L0 6" /></Ic></IconButton>
            <IconButton type="button" $w={17} $h={16} aria-label="Personalizar linha de comando"><Ic w={10} h={10} s="#a9aeb6" sw={2}><path d="M1 9l5-5" /><path d="M6 1v3h3" /></Ic></IconButton>
            <CommandField>
              <Ic w={10} h={8} s="#555"><path d="M.500 .500h9v7h-9zM0 1.500h10M2 3.500l1.500 1L2 5.500M5 6h2" /></Ic>
              <Caret color="#444" />
              <CommandInput aria-label="Linha de comando" placeholder="Digite um comando" />
              <Ic w={5} h={3} s="none"><path d="M0 3h5L2.500 0z" fill="#333" /></Ic>
            </CommandField>
          </Command>
        </Canvas>

        <StatusBar>
          <ModelTab>Modelo</ModelTab>
          <LayoutTab>ELEVATIONS</LayoutTab>
          <Slash />
          <IconButton $w={19} aria-label="Novo layout"><Plus size={8} /></IconButton>
          <Slash />
          <StatusTools>
            <StatusText $w={41}>MODELO</StatusText>
            <IconButton $w={11} aria-label="Grade"><Ic w={10} h={10}><path d="M2.500 0v10M5.500 0v10M8.500 0v10M0 2.500h10M0 5.500h10M0 8.500h10" /></Ic></IconButton>
            <IconButton $w={18} aria-label="Snap"><Ic w={9} h={9} s={c.white} sw={1}><path d="M0 1.500h9M0 4.500h9M0 7.500h9" strokeDasharray="1 3" /></Ic></IconButton>
            <IconButton $w={9} aria-label="Opções de snap"><Caret /></IconButton>
            <IconButton $w={17} aria-label="Modo orto"><Ic w={10} h={10}><path d="M1.500 0v9.500H10M2 6.500h2.500V9" /></Ic></IconButton>
            <IconButton $w={14} $h={14} $on aria-label="Rastreamento polar"><Ic w={11} h={11} s="#fff"><circle cx="5" cy="6" r="4" /><path d="M5 6l5-5M5 6.500h6" /></Ic></IconButton>
            <IconButton $w={12} aria-label="Opções polares"><Caret /></IconButton>
            <IconButton $w={13} aria-label="Isométrico"><Ic w={9} h={10}><path d="M0 1l9 8" stroke="#b8574c" /><path d="M4.500 0v10" stroke="#4fa866" /></Ic></IconButton>
            <IconButton $w={12} aria-label="Opções isométricas"><Caret /></IconButton>
            <IconButton $w={14} $h={14} $on aria-label="Rastreamento de objeto"><Ic w={10} h={10} s="#fff"><path d="M9 1L1 8.500h9" /></Ic></IconButton>
            <Spacer $w={2} />
            <IconButton $w={13} $h={14} $on aria-label="Snap ao objeto"><Ic w={11} h={11} s="#fff"><path d="M3 2.500h7v7H2.500V4" /><path d="M.500 .500h3v3h-3z" fill={c.active} /></Ic></IconButton>
            <IconButton $w={12} aria-label="Opções de snap ao objeto"><Caret /></IconButton>
            <Spacer $w={1} />
            <IconButton $w={14} $h={14} $on aria-label="Visibilidade da anotação"><Person extra={<circle cx="10" cy="2" r="1.500" stroke="#fff" />} /></IconButton>
            <IconButton $w={16} aria-label="Escala automática"><Person extra={<path d="M9 0v4M8 2h3" stroke="#fff" />} /></IconButton>
            <IconButton $w={15} aria-label="Anotação"><Person /></IconButton>
            <StatusText $w={13}>1:1</StatusText>
            <IconButton $w={7} aria-label="Escala da anotação"><Caret /></IconButton>
            <IconButton $w={20} aria-label="Espaço de trabalho"><Ic w={10} h={10} s={c.white} sw={2}><circle cx="5" cy="5" r="2.500" /><path d="M5 0v2M5 8v2M0 5h2M8 5h2M1.500 1.500l1 1M7.500 7.500l1 1M8.500 1.500l-1 1M2.500 7.500l-1 1" strokeWidth={1.5} /></Ic></IconButton>
            <IconButton $w={8} aria-label="Opções do espaço de trabalho"><Caret /></IconButton>
            <IconButton $w={16} aria-label="Monitor de anotação"><Ic w={11} h={11} s={c.white}><path d="M0 5.500h11M5.500 0v11" /></Ic></IconButton>
            <IconButton $w={17} aria-label="Isolar objetos"><Ic w={11} h={11}><path d="M.500 1.500h4v4h-4zM2 10.500h4L4 7z" /><circle cx="8.500" cy="6.500" r="2" /><path d="M6 2.500h3" /></Ic></IconButton>
            <IconButton $w={16} aria-label="Aceleração gráfica"><Ic w={11} h={11} s="none"><path d="M1 1h5v4H1z" fill={c.blue} /><path d="M0 5h6v4H3z" fill={c.yellow} /><path d="M6 2h3v4H6z" fill="#3e82c4" /><path d="M5 8l2 2 4-4" stroke="#67b84d" strokeWidth={2} /></Ic></IconButton>
            <IconButton $w={15} aria-label="Histórico"><Ic w={11} h={11} s="#d79b78"><path d="M3 3.500h3l4 3v4H2.500V5" /><path d="M.500 .500h3v3h-3z" /></Ic></IconButton>
            <IconButton $w={19} aria-label="Tela limpa"><Ic w={11} h={9} s={c.white}><path d="M.500 .500h10v8H.500zM6 2.500h2.500V5M5 6.500H2.500V4.500" /></Ic></IconButton>
            <IconButton $w={14} aria-label="Personalização"><Ic w={10} h={9} s={c.white}><path d="M0 .500h10M0 4.500h10M0 8.500h10" /></Ic></IconButton>
          </StatusTools>
        </StatusBar>
      </Window>
    </>
  );
}
